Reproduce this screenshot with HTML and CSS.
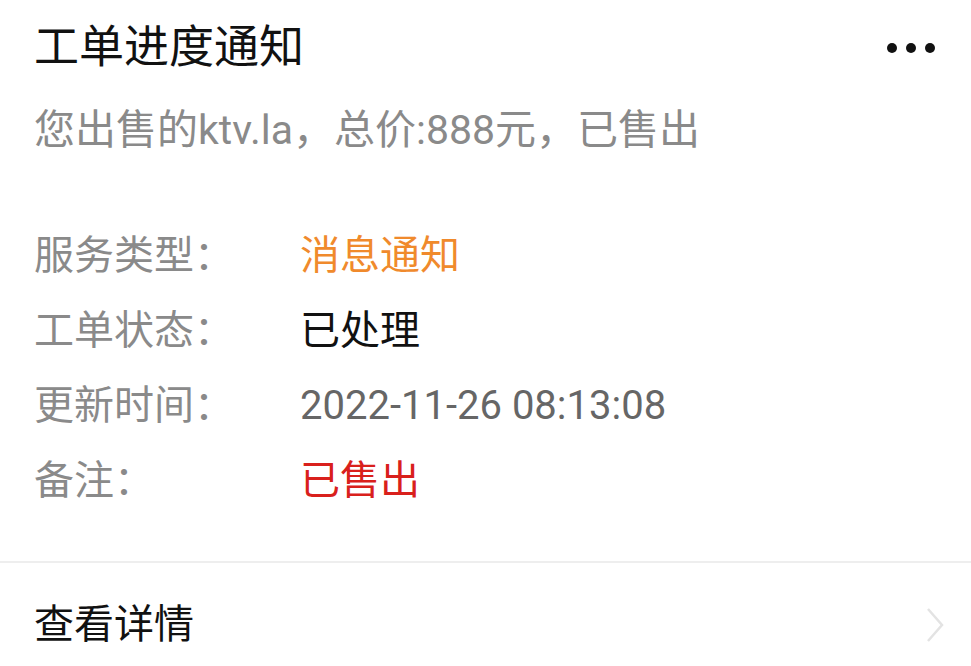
FILE: index.html
```html
<!DOCTYPE html>
<html lang="zh-CN">
<head>
    <meta charset="UTF-8">
    <meta name="viewport" content="width=device-width, initial-scale=1.0">
    <title>工单进度通知</title>
    <link rel="stylesheet" href="styles.css">
</head>
<body>

    <!-- Notice card -->
    <div class="card">
        <div class="card-head">
            <h1>工单进度通知</h1>
            <div class="more">
                <span class="dot"></span>
                <span class="dot"></span>
                <span class="dot"></span>
            </div>
        </div>
        <p class="summary">您出售的ktv.la，总价:888元，已售出</p>

        <div class="details">
            <div class="row">
                <span class="label">服务类型：</span>
                <span class="value orange">消息通知</span>
            </div>
            <div class="row">
                <span class="label">工单状态：</span>
                <span class="value dark">已处理</span>
            </div>
            <div class="row">
                <span class="label">更新时间：</span>
                <span class="value">2022-11-26 08:13:08</span>
            </div>
            <div class="row">
                <span class="label">备注：</span>
                <span class="value red">已售出</span>
            </div>
        </div>

        <a class="card-foot" href="#">
            <span>查看详情</span>
            <svg class="chevron" width="20" height="36" viewBox="0 0 20 36">
                <path d="M3 2 L17 18 L3 34" fill="none" stroke="#e3e3e3" stroke-width="2.5"/>
            </svg>
        </a>
    </div>

</body>
</html>
```

FILE: styles.css
```css
* {
    margin: 0;
    padding: 0;
    box-sizing: border-box;
}

body {
    font-family: Roboto, "Noto Sans CJK SC", sans-serif;
    background-color: #fff;
    color: #111;
}

.card {
    background-color: #fff;
}

/* Head */
.card-head {
    display: flex;
    justify-content: space-between;
    align-items: center;
    padding: 26px 36px 0 34px;
}

h1 {
    font-size: 45px;
    font-weight: normal;
    line-height: 44px;
    color: #111;
}

.more {
    display: flex;
    gap: 9px;
}

.dot {
    width: 10px;
    height: 10px;
    border-radius: 50%;
    background-color: #111;
}

.summary {
    padding: 38px 34px 0 34px;
    font-size: 41px;
    line-height: 44px;
    color: #8a8a8a;
}

/* Detail rows */
.details {
    padding: 82px 34px 0 34px;
    display: flex;
    flex-direction: column;
    gap: 31px;
}

.row {
    display: flex;
    font-size: 40px;
    line-height: 44px;
}

.label {
    width: 266px;
    color: #8a8a8a;
}

.value {
    color: #666;
}

.value.orange {
    color: #f08a2c;
}

.value.dark {
    color: #111;
}

.value.red {
    color: #d9201c;
}

/* Footer link */
.card-foot {
    display: flex;
    justify-content: space-between;
    align-items: center;
    margin-top: 58px;
    padding: 40px 26px 0 34px;
    border-top: 2px solid #eeeeee;
    color: #111;
    text-decoration: none;
    font-size: 40px;
    line-height: 44px;
}
```
